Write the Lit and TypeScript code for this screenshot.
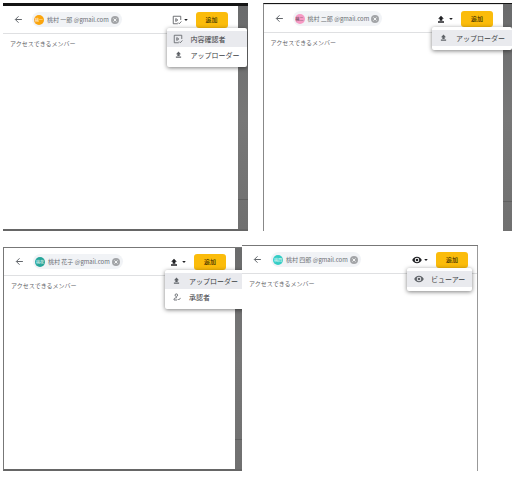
import { LitElement, html, svg, css } from "lit";
import { customElement, property } from "lit/decorators.js";
import { classMap } from "lit/directives/class-map.js";

type IconName = "back" | "review" | "upload" | "approve" | "eye" | "caret" | "close";

const shapes: Record<IconName, unknown> = {
  back: svg`<path d="M21 12H4M12 3.500l-8.500 8.500 8.500 8.500" fill="none" stroke="currentColor" stroke-width="2.600"/>`,
  review: svg`<path d="M14 21H3V3h18v9M9 8.500v7l5-3.500zM14.500 18l3 3 5-5.500" fill="none" stroke="currentColor" stroke-width="2"/>`,
  upload: svg`<path d="M12 2l-8.500 9H8v6h8v-6h4.500zM3 19h18v4H3z" fill="currentColor"/>`,
  approve: svg`<circle cx="10" cy="6.500" r="3.800" fill="none" stroke="currentColor" stroke-width="2.600"/><path d="M12 14c-5 0-9 2-9 5v2h9M14 18l3 3 6-6.500" fill="none" stroke="currentColor" stroke-width="2.600"/>`,
  eye: svg`<path d="M12 4C6.500 4 2.500 7.500 .5 12c2 4.500 6 8 11.500 8s9.500-3.500 11.500-8C21.500 7.500 17.500 4 12 4zm0 13.500a5.500 5.500 0 1 1 0-11 5.500 5.500 0 0 1 0 11z" fill="currentColor" fill-rule="evenodd"/><circle cx="12" cy="12" r="3.200" fill="currentColor"/>`,
  caret: svg`<path d="M1 6h22L12 18z" fill="currentColor"/>`,
  close: svg`<circle cx="12" cy="12" r="12" fill="currentColor"/><path d="M7.500 7.500l9 9M16.500 7.500l-9 9" stroke="#fff" stroke-width="2.600"/>`,
};

const icon = (name: IconName) =>
  html`<svg class="icon ${name}" viewBox="0 0 24 24" aria-hidden="true">${shapes[name]}</svg>`;

interface Role {
  icon: IconName;
  label: string;
}

interface Member {
  id: string;
  name: string;
  initials: string;
  roles: Role[];
}

const uploader: Role = { icon: "upload", label: "アップローダー" };

const members: Record<string, Member> = {
  ichiro: { id: "ichiro", name: "桃村 一郎", initials: "桃一", roles: [{ icon: "review", label: "内容確認者" }, uploader] },
  jiro: { id: "jiro", name: "桃村 二郎", initials: "桃二", roles: [uploader] },
  hanako: { id: "hanako", name: "桃村 花子", initials: "桃花", roles: [uploader, { icon: "approve", label: "承認者" }] },
  shiro: { id: "shiro", name: "桃村 四郎", initials: "桃四", roles: [{ icon: "eye", label: "ビューアー" }] },
};

@customElement("share-panel")
export class SharePanel extends LitElement {
  @property({ attribute: false }) member!: Member;

  static styles = css`
    :host {
      display: flex;
      box-sizing: border-box;
      min-width: 0;
      overflow: hidden;
      font-family: "Noto Sans CJK JP", sans-serif;
      color: #5f6368;
    }
    * { box-sizing: border-box; }
    button {
      border: 0;
      padding: 0;
      margin: 0;
      background: none;
      font: inherit;
      color: inherit;
      display: flex;
      align-items: center;
      flex: none;
    }
    .icon { display: block; width: 8px; height: 8px; flex: none; }
    .icon.back { width: 9px; height: 9px; }
    .icon.review, .icon.eye { width: 10px; height: 10px; }
    .icon.caret { width: 4px; height: 4px; }
    .sheet { flex: 1; min-width: 0; background: #fff; }
    .sheet.jiro { border-top: 1px solid #e4e4e4; }
    .strip {
      flex: none;
      background:
        linear-gradient(#606060, #606060) 0 87% / 100% 1px no-repeat,
        linear-gradient(#6a6b6c, #777 50%, #707070);
    }
    .strip.ichiro { width: 10px; }
    .strip.jiro { width: 9px; }
    .strip.hanako { width: 7px; }
    .strip.shiro { width: 1px; background: #999; }
    .bar {
      display: flex;
      align-items: center;
      height: 28px;
      padding: 0 9px 0 11px;
      border-bottom: 1px solid #dfe0e2;
    }
    .bar.ichiro, .bar.jiro { padding-right: 10px; }
    .chip {
      display: flex;
      align-items: center;
      gap: 3px;
      height: 15px;
      margin-left: 9px;
      padding: 0 3px 0 2px;
      border-radius: 8px;
      background: #f1f3f6;
      font-size: 6px;
      line-height: 10px;
      white-space: nowrap;
      color: #6b6f74;
    }
    .chip button { margin-left: -1px; color: #a3a5a8; }
    .avatar {
      display: flex;
      align-items: center;
      justify-content: center;
      width: 10px;
      height: 10px;
      border-radius: 50%;
      font-size: 4px;
      color: #fff;
    }
    .avatar.ichiro { background: #fba50d; }
    .avatar.jiro { background: #f79ac4; color: #333; }
    .avatar.hanako { background: #26a69a; }
    .avatar.shiro { background: #34cdc5; }
    .role { position: relative; margin-left: auto; margin-right: 8px; }
    .trigger { width: 16px; height: 16px; justify-content: space-between; color: #202124; }
    .trigger .review { color: #55585c; }
    .add {
      justify-content: center;
      width: 32px;
      height: 16px;
      border-radius: 3px;
      background: #fbbc0b;
      color: #3b3000;
      font-size: 6px;
      font-weight: 500;
    }
    .menu {
      position: absolute;
      z-index: 1;
      top: 100%;
      left: -5px;
      padding: 3px 0 4px;
      border-radius: 2px;
      background: #fff;
      box-shadow: 0 1px 4px rgba(0, 0, 0, 0.5);
    }
    .item {
      width: 100%;
      height: 16px;
      padding: 0 7px;
      gap: 8px;
      font-size: 7px;
      line-height: 10px;
      white-space: nowrap;
      color: #3c4043;
    }
    .item.selected { background: #e9eaee; }
    .glyph { display: flex; justify-content: center; width: 9px; color: #5f6368; }
    .glyph .upload { width: 7px; height: 7px; }
    .heading {
      margin: 0;
      padding: 6px 7px;
      font-size: 6px;
      font-weight: 400;
      line-height: 8px;
    }
  `;

  render() {
    const m = this.member;
    return html`
      <section class="sheet ${m.id}">
        <header class="bar ${m.id}">
          <button aria-label="戻る">${icon("back")}</button>
          <div class="chip">
            <span class="avatar ${m.id}">${m.initials}</span>
            <span>${m.name} @gmail.com</span>
            <button aria-label="削除">${icon("close")}</button>
          </div>
          <div class="role">
            <button class="trigger" aria-haspopup="menu" aria-expanded="true" aria-label=${m.roles[0].label}>
              ${icon(m.roles[0].icon)}${icon("caret")}
            </button>
            <div class="menu" role="menu">
              ${m.roles.map(
                (r, i) => html`<button role="menuitem" class=${classMap({ item: true, selected: i === 0 })}>
                  <span class="glyph">${icon(r.icon)}</span><span>${r.label}</span>
                </button>`
              )}
            </div>
          </div>
          <button class="add">追加</button>
        </header>
        <h2 class="heading">アクセスできるメンバー</h2>
      </section>
      <div class="strip ${m.id}"></div>
    `;
  }
}

@customElement("app-root")
export class AppRoot extends LitElement {
  static styles = css`
    :host { display: block; background: #fff; padding: 3px 4px 11px 3px; }
    .row { display: flex; }
    .row.top { gap: 15px; margin-bottom: 14px; }
    .row.bottom { padding-right: 34px; }
    .ichiro {
      flex: 245 1 0;
      min-height: 228px;
      border-top: 3px solid #141414;
      border-bottom: 2px solid #666;
    }
    .jiro {
      flex: 249 1 0;
      min-height: 228px;
      border-top: 1px solid #141414;
      border-left: 1px solid #888;
    }
    .hanako {
      flex: 238 1 0;
      min-height: 224px;
      margin-top: 2px;
      border-top: 1px solid #777;
      border-left: 1px solid #777;
      border-bottom: 2px solid #666;
    }
    .shiro {
      flex: 236 1 0;
      min-height: 226px;
      border-top: 1px solid #777;
    }
  `;

  render() {
    return html`
      <main>
        <div class="row top">
          <share-panel class="ichiro" .member=${members.ichiro}></share-panel>
          <share-panel class="jiro" .member=${members.jiro}></share-panel>
        </div>
        <div class="row bottom">
          <share-panel class="hanako" .member=${members.hanako}></share-panel>
          <share-panel class="shiro" .member=${members.shiro}></share-panel>
        </div>
      </main>
    `;
  }
}
